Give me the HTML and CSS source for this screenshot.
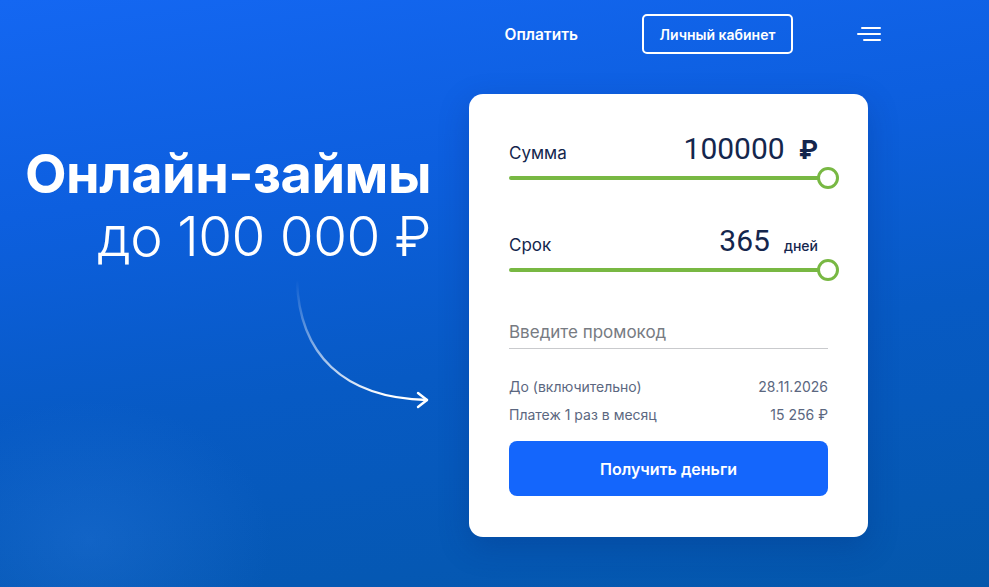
FILE: index.html
```html
<!DOCTYPE html>
<html lang="ru">
<head>
<meta charset="utf-8">
<title>Онлайн-займы</title>
<link rel="stylesheet" href="styles.css">
</head>
<body>
<div class="page">
  <header class="header">
    <a class="nav-link" href="#">Оплатить</a>
    <a class="nav-btn" href="#">Личный кабинет</a>
    <button class="burger" aria-label="Меню">
      <span class="bar bar1"></span>
      <span class="bar bar2"></span>
      <span class="bar bar3"></span>
    </button>
  </header>
  <main class="main">
    <section class="hero">
      <h1 class="title">Онлайн-займы</h1>
      <div class="subtitle">до 100 000 ₽</div>
      <svg class="arrow" width="140" height="134" viewBox="0 0 140 134" fill="none">
        <defs>
          <linearGradient id="ag" x1="0" y1="0" x2="0.6" y2="1">
            <stop offset="0" stop-color="#ffffff" stop-opacity="0"/>
            <stop offset="0.55" stop-color="#ffffff" stop-opacity="0.6"/>
            <stop offset="1" stop-color="#ffffff" stop-opacity="1"/>
          </linearGradient>
        </defs>
        <path d="M4 2 C 6 76, 50 120, 134 122" stroke="url(#ag)" stroke-width="2.4" stroke-linecap="round"/>
        <path d="M125 115 L134 122 L125 129" stroke="#ffffff" stroke-width="2.4" stroke-linecap="round" stroke-linejoin="round"/>
      </svg>
    </section>
    <section class="card">
      <div class="field">
        <div class="field-row">
          <span class="field-label">Сумма</span>
          <span class="field-value"><span class="num">100000</span><span class="unit rub">₽</span></span>
        </div>
        <div class="slider"><span class="thumb"></span></div>
      </div>
      <div class="field field2">
        <div class="field-row">
          <span class="field-label">Срок</span>
          <span class="field-value"><span class="num">365</span><span class="unit days">дней</span></span>
        </div>
        <div class="slider"><span class="thumb"></span></div>
      </div>
      <div class="promo">Введите промокод</div>
      <div class="info">
        <div class="info-row"><span>До (включительно)</span><span>28.11.2026</span></div>
        <div class="info-row"><span>Платеж 1 раз в месяц</span><span>15 256 ₽</span></div>
      </div>
      <button class="cta">Получить деньги</button>
    </section>
  </main>
</div>
</body>
</html>
```
FILE: styles.css
```css
* { box-sizing: border-box; }
html, body { margin: 0; padding: 0; }
body {
  font-family: Inter, "Noto Sans", "Liberation Sans", sans-serif;
  width: 989px;
  height: 587px;
  overflow: hidden;
  background:
    radial-gradient(ellipse 260px 200px at 90px 540px, rgba(40,120,220,0.35), rgba(40,120,220,0) 70%),
    linear-gradient(172deg, #1467f2 0%, #0d5fdf 30%, #075ac4 60%, #0457ab 100%);
  color: #fff;
}
.page { width: 989px; height: 587px; }
.header {
  display: flex;
  justify-content: flex-end;
  align-items: center;
  gap: 64px;
  padding: 14px 108px 0 0;
  height: 54px;
}
.nav-link {
  color: #fff;
  text-decoration: none;
  font-weight: 600;
  font-size: 15.5px;
}
.nav-btn {
  display: flex;
  align-items: center;
  justify-content: center;
  width: 151px;
  height: 40px;
  border: 2px solid #fff;
  border-radius: 5px;
  color: #fff;
  text-decoration: none;
  font-weight: 600;
  font-size: 14px;
}
.burger {
  display: flex;
  flex-direction: column;
  align-items: flex-end;
  gap: 4px;
  width: 24px;
  padding: 0;
  background: none;
  border: 0;
}
.bar { display: block; height: 2px; background: #fff; border-radius: 1px; }
.bar1 { width: 20px; }
.bar2 { width: 24px; }
.bar3 { width: 18px; }

.main {
  display: flex;
  align-items: flex-start;
  gap: 38px;
  margin-top: 40px;
}
.hero {
  width: 431px;
  text-align: right;
  padding-top: 48px;
}
.title {
  margin: 0;
  font-size: 54px;
  font-weight: 700;
  line-height: 64px;
  letter-spacing: -0.5px;
}
.subtitle {
  font-size: 54.8px;
  font-weight: 300;
  line-height: 60px;
  letter-spacing: -0.5px;
}
.arrow {
  display: block;
  margin: 12px 0 0 auto;
  position: relative;
  left: 2px;
}

.card {
  width: 399px;
  height: 443px;
  background: #fff;
  border-radius: 14px;
  padding: 37px 40px 0;
  color: #14264d;
  box-shadow: 0 10px 30px rgba(0, 40, 110, 0.25);
}
.field-row {
  display: flex;
  justify-content: space-between;
  align-items: baseline;
  height: 44px;
}
.field-label { font-size: 17px; }
.field-value { display: flex; align-items: baseline; }
.num { font-family: Roboto, Inter, sans-serif; font-size: 30px; font-weight: 400; }
.unit { margin-left: 14px; }
.rub { font-size: 26px; font-weight: 700; margin-right: 10px; }
.days { font-size: 14px; font-weight: 500; margin-right: 10px; }
.slider {
  position: relative;
  height: 4px;
  margin-top: 1px;
  background: #78b843;
  border-radius: 2px;
}
.thumb {
  position: absolute;
  right: -11px;
  top: -9px;
  width: 22px;
  height: 22px;
  border-radius: 50%;
  background: #fff;
  border: 3px solid #78b843;
}
.field2 { margin-top: 43px; }
.promo {
  margin-top: 50px;
  font-size: 17px;
  color: #777b82;
  padding-bottom: 6px;
  border-bottom: 1px solid #c9cacd;
}
.info {
  margin-top: 29px;
  font-size: 14px;
  color: #5b6780;
}
.info-row {
  display: flex;
  justify-content: space-between;
  height: 28px;
}
.cta {
  display: block;
  width: 100%;
  height: 55px;
  margin-top: 7px;
  background: #1466fc;
  border: 0;
  border-radius: 8px;
  color: #fff;
  font-family: inherit;
  font-weight: 600;
  font-size: 16px;
}
```
